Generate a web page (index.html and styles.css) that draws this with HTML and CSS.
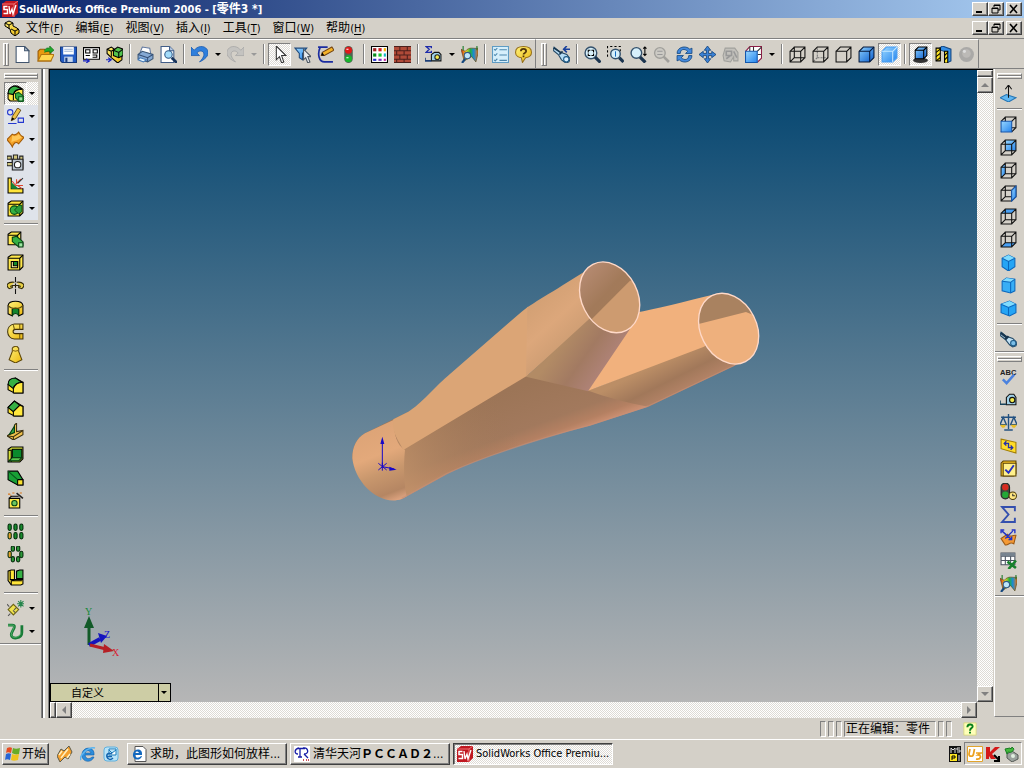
FILE: index.html
```html
<!DOCTYPE html>
<html lang="zh-CN">
<head>
<meta charset="utf-8">
<title>SolidWorks Office Premium 2006 - [零件3 *]</title>
<link rel="stylesheet" href="styles.css">
</head>
<body>
<svg class="sprite" aria-hidden="true">
  <defs>
    <linearGradient id="blue" x1="0" y1="0" x2="1" y2="1"><stop offset="0" stop-color="#8cd0ff"/><stop offset="1" stop-color="#0a5ccc"/></linearGradient>
    <linearGradient id="sky" x1="0" y1="0" x2="1" y2="1"><stop offset="0" stop-color="#9ad8ff"/><stop offset="1" stop-color="#2484ee"/></linearGradient>
    <linearGradient id="gold" x1="0" y1="0" x2="1" y2="1"><stop offset="0" stop-color="#fff27a"/><stop offset="1" stop-color="#ecb810"/></linearGradient>
    <linearGradient id="green" x1="0" y1="0" x2="1" y2="1"><stop offset="0" stop-color="#5fd060"/><stop offset="1" stop-color="#067a20"/></linearGradient>
    <linearGradient id="rainbow"><stop offset="0" stop-color="#d01818"/><stop offset=".3" stop-color="#f8e020"/><stop offset=".55" stop-color="#20b040"/><stop offset=".75" stop-color="#1a8ad8"/><stop offset="1" stop-color="#e87818"/></linearGradient>

    <symbol id="sw" viewBox="0 0 16 16"><path d="M0 3 4 0h12v12l-4 4H0z" fill="#c01820"/><path d="M0 3h12l4-3M12 3v13" stroke="#f07070" fill="none"/><path d="M5.500 5.500H2v3h3.500v4H1.500" stroke="#fff" stroke-width="1.500" fill="none"/><path d="m7 5 1 8 2-5 1 5 3-9" stroke="#fff" stroke-width="1.300" fill="none"/></symbol>
    <symbol id="part" viewBox="0 0 16 16"><path d="M1 3 5 1l4 2v3l4 2 2 2v3l-4 3-4-3-1-4-5-3z" fill="url(#gold)" stroke="#000"/><path d="m1 3 4 2 4-2M5 5v4M7 9l4 2 4-2M11 11v5" stroke="#000" fill="none"/></symbol>
    <symbol id="new" viewBox="0 0 16 16"><path d="M2 .5h8l4 4v11H2z" fill="#fff" stroke="#41556e"/><path d="M10 .5v4h4z" fill="#bccbdc" stroke="#41556e"/></symbol>
    <symbol id="open" viewBox="0 0 16 16"><path d="M1 14V5l2-2h4l1 2h5v9z" fill="#e89a10" stroke="#985808"/><path d="m1 14 3-6h12l-3 6z" fill="#ffd64e" stroke="#b27510"/><path d="M7 4c2-3 4-2 5-2V0l4 4-4 3V5c-2 0-3 0-5 1" fill="#21a72c" stroke="#116815" stroke-width=".6"/></symbol>
    <symbol id="save" viewBox="0 0 16 16"><path d="M.5 1h15v14.500H2L.5 14z" fill="#245cc4" stroke="#14387c"/><path d="M3 1h10v7H3z" fill="#fff"/><path d="M4 3h8M4 5h8" stroke="#9db5d8"/><path d="M4 10h8v5H4z" fill="#c9d7eb"/><path d="M5 11h2v4H5z" fill="#173b82"/></symbol>
    <symbol id="drawing" viewBox="0 0 16 16"><path d="M.5 1.500h15v11H.5z" fill="#fff" stroke="#000"/><path d="M2.500 3.500h4v3h-4zM9.500 3.500h4v3h-4zM2.500 9h4M9 8.500h4v2H9" fill="none" stroke="#000"/><path d="M0 14h5m-2-2 3 2-3 2" stroke="#1622c0" fill="none"/></symbol>
    <symbol id="assembly" viewBox="0 0 16 16"><path d="m1 3 4-2 3 2v4l7 1v5l-4 3-6-5-4-4z" fill="url(#gold)" stroke="#000"/><path d="m7 4 4-3 5 2v6l-4 2-5-2z" fill="#52c34d" stroke="#000"/><path d="m7 4 5 2 4-3M12 6v5M1 3l4 2 3-2M5 5v5" stroke="#000" fill="none"/><path d="M0 13h4m-2-2 3 2-3 2" stroke="#1622c0" fill="none"/></symbol>
    <symbol id="print" viewBox="0 0 16 16"><path d="m3 6 2-5 7 1 1 6z" fill="#fff" stroke="#6078a0"/><path d="m1 8 4-3 10 3v4l-5 3-9-3z" fill="#85a9d4" stroke="#3c5878"/><path d="m1 8 9 3 5-3M10 11v4" stroke="#334e75" fill="none"/><path d="m3 11 6 2-3 2-5-2z" fill="#e3f4ff" stroke="#4579b6"/></symbol>
    <symbol id="preview" viewBox="0 0 16 16"><path d="M1 .5h8l4 4v11H1z" fill="#fff" stroke="#415d88"/><path d="M9 .5v4h4" fill="#b9cce5" stroke="#415d88"/><circle cx="8" cy="8" r="3.500" fill="#a4dcfa" stroke="#315987"/><path d="m11 11 5 5" stroke="#18345c" stroke-width="2.500"/></symbol>
    <symbol id="undo" viewBox="0 0 16 16"><path d="M0 1v8h8L5.500 6.500C9 3 13 5 12 9c-.5 2-2 4-4 6 7-3 10-8 7-12-3-4-9-3-12 1z" fill="#2f7fdc" stroke="#1757ad" stroke-width=".7"/></symbol>
    <symbol id="redo" viewBox="0 0 16 16"><path d="M16 1v8H8l2.500-2.500C7 3 3 5 4 9c.5 2 2 4 4 6C1 12-2 7 1 3c3-4 9-3 12 1z" fill="#c4c3c0" stroke="#a5a5a5" stroke-width=".7"/></symbol>
    <symbol id="select" viewBox="0 0 16 16"><path d="M5 0v13l3-3 2 6 2-1-2-6h4z" fill="#fff" stroke="#333"/></symbol>
    <symbol id="filter" viewBox="0 0 16 16"><path d="M1 2h11L8 7v6l-3-2V7z" fill="url(#sky)" stroke="#204b7d"/><path d="M9 3v10l2-2 2 5 2-1-2-5h3z" fill="#e9ecf0" stroke="#4b5561"/></symbol>
    <symbol id="sketch" viewBox="0 0 16 16"><path d="M10 1H1M3 1C0 8 2 15 7 15h8" fill="none" stroke="#1b2ca0" stroke-width="1.600"/><path d="m4 9 1-3 9-5 2 3-9 5z" fill="#f5b328" stroke="#744411"/><path d="m4 9 1-3 2 3z" fill="#000"/></symbol>
    <symbol id="light" viewBox="0 0 16 16"><rect x="4" width="8" height="16" rx="4" fill="#4e6252"/><circle cx="8" cy="4" r="3.300" fill="#e01818"/><circle cx="8" cy="12" r="3.300" fill="#18b52c"/><path d="M6 3h2M6 11h2" stroke="#fff"/></symbol>
    <symbol id="colors" viewBox="0 0 16 16"><path d="M.5.500h15v15H.5z" fill="#fff" stroke="#000"/><path d="M2 2h3v3H2z" fill="#a02020"/><path d="M7 2h3v3H7z" fill="#d02020"/><path d="M12 2h2v3h-2z" fill="#f5b200"/><path d="M2 7h3v3H2z" fill="#0a8c20"/><path d="M7 7h3v3H7z" fill="#19c830"/><path d="M12 7h2v3h-2z" fill="#12b7c9"/><path d="M2 12h3v2H2z" fill="#222ccc"/><path d="M7 12h3v2H7z" fill="#7530c0"/><path d="M12 12h2v2h-2z" fill="#c020a0"/></symbol>
    <symbol id="brick" viewBox="0 0 16 16"><path d="M0 0h16v16H0z" fill="#b04a38"/><path d="M0 .5h16M0 4.500h16M0 8.500h16M0 12.500h16M0 15.500h16M5.500 0v4M12.500 0v4M2.500 5v3M9.500 5v3M5.500 9v3M12.500 9v3M2.500 13v3M9.500 13v3" stroke="#4b201c"/></symbol>
    <symbol id="sigma-measure" viewBox="0 0 16 16"><path d="M6 2V.5H1L4 3 1 6h5V4.500" fill="none" stroke="#1d2bab" stroke-width="1.200"/><path d="M6 14V8l3-2h4l2 2v6z" fill="#9fd0e8" stroke="#111"/><circle cx="11.500" cy="10.500" r="2.200" fill="#f2ea50" stroke="#222"/><path d="M6 14H0v-3" stroke="#1c3f78" stroke-width="1.500" fill="none"/></symbol>
    <symbol id="analysis" viewBox="0 0 16 16"><path d="m0 3 4 2c4-5 8-2 12-3v5l-2 8-4-5-7 4z" fill="url(#rainbow)" stroke="#5b4a19" stroke-width=".6"/><circle cx="6" cy="9" r="3" fill="#bde6fa" stroke="#315987"/><path d="m4 12-3 4" stroke="#16487e" stroke-width="2"/><path d="M2 0v4M15 0v4" stroke="#187826"/></symbol>
    <symbol id="options" viewBox="0 0 16 16"><path d="M.5.500h15v15H.5z" fill="#d6effb" stroke="#5f9cc4"/><path d="m2 3 1 1 2-2M2 8l1 1 2-2M2 13l1 1 2-2M7 3.500h7M7 8.500h7M7 13.500h7" fill="none" stroke="#4c87ad"/></symbol>
    <symbol id="help" viewBox="0 0 16 16"><path d="M8 .5C3 .5.500 3 .500 6c0 4 4 5 5.500 5l1 4.500 3-4.500c3-.5 5.500-2 5.500-5C15.500 3 13 .5 8 .5z" fill="url(#gold)" stroke="#96701a"/><path d="M5.500 5c0-3 5-3 5 0 0 1.500-2.500 1.500-2.500 3M8 9v1.500" fill="none" stroke="#53370b" stroke-width="1.600"/></symbol>
    <symbol id="torch-back" viewBox="0 0 16 16"><path d="M1 1 0 4l5 4 3 5 4 3 3-1 1-3-3-4-6-2z" fill="#b5dcf4" stroke="#234865"/><path d="m1 2 6 4M6 8l3-3" stroke="#18364e" stroke-width="1.500"/><circle cx="12.500" cy="12.500" r="2.500" fill="#d8f0ff" stroke="#1e5b87"/><path d="M16 3h-6m3-3-3 3 3 3" fill="none" stroke="#18409c" stroke-width="1.500"/></symbol>
    <symbol id="zoom-fit" viewBox="0 0 16 16"><circle cx="6.500" cy="6.500" r="5.500" fill="#d7f0fb" stroke="#34516c" stroke-width="1.300"/><path d="m10.500 10.500 5 5" stroke="#1b3550" stroke-width="3"/><path d="M4 6V4h2M7 4h2v2M4 7v2h2M9 7v2H7" fill="none" stroke="#000"/></symbol>
    <symbol id="zoom-area" viewBox="0 0 16 16"><path d="M.5 10V.5h12V5" fill="none" stroke="#000" stroke-dasharray="2"/><circle cx="8" cy="7.500" r="4.500" fill="#d7f0fb" stroke="#34516c" stroke-width="1.300"/><path d="m11.500 11 4 4" stroke="#1b3550" stroke-width="3"/><path d="M8 5v5" stroke="#136bc0"/></symbol>
    <symbol id="zoom-inout" viewBox="0 0 16 16"><circle cx="6" cy="6.500" r="5" fill="#d7f0fb" stroke="#34516c" stroke-width="1.300"/><path d="m9.500 10.500 5 5" stroke="#1b3550" stroke-width="3"/><path d="M14 1v8M12.500 2.500 14 1l1.500 1.500M12.500 7.500 14 9l1.500-1.500" fill="none" stroke="#000"/></symbol>
    <symbol id="zoom-sel" viewBox="0 0 16 16"><circle cx="6.500" cy="6.500" r="5" fill="#cccac4" stroke="#a1a09c" stroke-width="1.300"/><path d="m10 10 5 5" stroke="#a1a09c" stroke-width="2.500"/><path d="M4 5h5M4 8h5" stroke="#999"/></symbol>
    <symbol id="rotate" viewBox="0 0 16 16"><path d="M1 7C1 1 9-1 13 3l2-1v5h-6l2-2C8 2 4 3 4 7zM15 9c0 6-8 8-12 4l-2 1V9h6l-2 2c3 3 7 2 7-2z" fill="#4389dd" stroke="#174981" stroke-width=".8"/></symbol>
    <symbol id="pan" viewBox="0 0 16 16"><path d="m8 0 3 4H9v3h3V5l4 3-4 3V9H9v3h2l-3 4-3-4h2V9H4v2L0 8l4-3v2h3V4H5z" fill="#3b82d6" stroke="#17477f" stroke-width=".8"/></symbol>
    <symbol id="view3d-off" viewBox="0 0 16 16"><path d="M3 2h9l3 4v8h-4v-4l-3 5-6-1-1-5z" fill="#c2c0bb" stroke="#a0a09c"/><path d="M4 5h5v4H4zM11 5l3 6M4 12l4-3" fill="none" stroke="#999" stroke-width="1.500"/></symbol>
    <symbol id="std-views" viewBox="0 0 16 16"><path d="m.5 5 4-4.500h11v11l-4 4" fill="#fff" stroke="#8b1d45"/><path d="M8 5V1M11.500 5l4-4M12 8h3M4.500 5V1" stroke="#333"/><path d="M.5 5h11v10.500H.5z" fill="url(#sky)" stroke="#1257ad"/></symbol>
    <symbol id="wire" viewBox="0 0 16 16"><path d="M1 5h10v10H1zM5 1h10v10H5zM1 5l4-4M11 5l4-4M1 15l4-4M11 15l4-4" fill="none" stroke="#111"/></symbol>
    <symbol id="hidden-gray" viewBox="0 0 16 16"><path d="M5 2v9H15M5 11l-4 4" fill="none" stroke="#777" stroke-dasharray="2 1"/><path d="M1 5h10v10H1zM1 5l4-4h10v10l-4 4M11 5l4-4" fill="none" stroke="#111"/></symbol>
    <symbol id="hidden-none" viewBox="0 0 16 16"><path d="M1 5h10v10H1zM1 5l4-4h10v10l-4 4M11 5l4-4" fill="none" stroke="#111"/></symbol>
    <symbol id="shaded-edge" viewBox="0 0 16 16"><path d="m1 5 4-4h10v10l-4 4H1z" fill="url(#blue)" stroke="#06183a" stroke-linejoin="round"/><path d="M1 5h10v10M11 5l4-4" fill="none" stroke="#06183a"/></symbol>
    <symbol id="shaded" viewBox="0 0 16 16"><path d="m1 5 4-4h10v10l-4 4H1z" fill="url(#sky)" stroke="#479cf2"/><path d="M1 5h10v10M11 5l4-4" fill="none" stroke="#c3e7ff"/></symbol>
    <symbol id="shadow" viewBox="0 0 16 16"><ellipse cx="8" cy="13.500" rx="7" ry="2.500" fill="#333"/><path d="m3 4 3-3h8v8l-3 3H3z" fill="url(#blue)" stroke="#000"/><path d="M3 4h8v8M11 4l3-3" fill="none" stroke="#000"/></symbol>
    <symbol id="section" viewBox="0 0 16 16"><path d="m3 3 4-3 8 3v11l-4 2V6z" fill="#358fe6" stroke="#154781"/><path d="M1 2h4v12H1zM9 5h3v11H9z" fill="#ffe624" stroke="#000"/><path d="m1 6 4-3M1 10l4-3M1 14l4-3M9 9l3-3M9 13l3-3" stroke="#000"/></symbol>
    <symbol id="real-off" viewBox="0 0 16 16"><circle cx="8" cy="8" r="7" fill="#aaa9a7"/><circle cx="8" cy="7" r="4" fill="#bcbab7"/><circle cx="6" cy="5" r="1.500" fill="#ddd"/></symbol>

    <symbol id="features" viewBox="0 0 16 16"><path d="m1 8 1-4 4-3h4l5 3v9l-3 2H3l-2-2z" fill="#ffe84a" stroke="#000"/><path d="M1 8c0-4 3-7 7-7l6 3c-5 0-7 1-8 5z" fill="#35b044" stroke="#000"/><path d="M6 14V9c1-3 4-5 8-5" fill="none" stroke="#000"/><path d="m8 8 3-1 5 4v4l-4 1-4-4z" fill="#35b044" stroke="#095318"/><path d="M11 11h4v4h-4z" fill="#9be8a0" stroke="#095318"/></symbol>
    <symbol id="sketches" viewBox="0 0 16 16"><circle cx="3" cy="4" r="2.500" fill="none" stroke="#2538cf"/><path d="M10.500 9.500h5v4h-5zM1 14.500h8" fill="none" stroke="#2538cf"/><path d="m4 12 1-4 5-8 3 2-5 8z" fill="#f0c448" stroke="#51380b" stroke-width=".8"/><path d="m4 12 1-3 2 1z" fill="#000"/></symbol>
    <symbol id="surface" viewBox="0 0 16 16"><path d="m0 8 5-5c3 2 5-1 6-2 1 3 3 4 5 5l-5 6c-3-3-5 0-6 3-1-3-3-4-5-7z" fill="#f4a126" stroke="#a15a08"/><path d="M5 4c3 2 5 0 6-1l3 3-5 3c-2 0-4 1-5 2z" fill="#ffc85a"/></symbol>
    <symbol id="sheet" viewBox="0 0 16 16"><path d="M0 2h4v3h2V1h4v4h2V2h3v12H6v-3H0V8h5V5H0z" fill="#d2c77d" stroke="#222"/><path d="M5 5h10v10H5z" fill="#bbc5cf" stroke="#222"/><circle cx="10" cy="10" r="3" fill="#fff" stroke="#222"/></symbol>
    <symbol id="weld" viewBox="0 0 16 16"><path d="M1 1h3v10h11v4H1z" fill="#ffe53a" stroke="#000"/><path d="M4 5v6h7z" fill="#138432"/><path d="m8 7 5-5M8 8h7M10 8l4 3M9 6V2M8 8 5 4" stroke="#dc432a"/><path d="m10 6 5-5" stroke="#333"/></symbol>
    <symbol id="mold" viewBox="0 0 16 16"><path d="m1 3 3-2h11v11l-3 3H1z" fill="#ffe53a" stroke="#000"/><path d="M1 4h11v11M12 4l3-3" fill="none" stroke="#000"/><circle cx="7" cy="9.500" r="4" fill="#35b044" stroke="#064715"/><path d="M7 9.500 11 5h3v6l-3 2z" fill="#2a9c3a" stroke="#064715" stroke-width=".8"/></symbol>
    <symbol id="extrude" viewBox="0 0 16 16"><path d="m1 3 3-2h9v9l-3 3H1z" fill="#ffe84a" stroke="#000"/><path d="M1 4h9v9M10 4l3-3" fill="none" stroke="#000"/><path d="m5 6 4-1 6 5v4l-4 1-6-5z" fill="#35b044" stroke="#053c12"/><path d="M11 11h4v4h-4z" fill="#9be8a0" stroke="#053c12"/></symbol>
    <symbol id="cut" viewBox="0 0 16 16"><path d="m1 3 3-2h11v11l-3 3H1z" fill="#ffe84a" stroke="#000"/><path d="M1 4h11v11M12 4l3-3" fill="none" stroke="#000"/><path d="M4 7h6v6H4z" fill="#fff6a0" stroke="#000"/><path d="M6 7h4v4H6z" fill="#118a2c" stroke="#000"/></symbol>
    <symbol id="revolve" viewBox="0 0 16 16"><path d="M8 0v5m0 1v4m0 1v5" stroke="#111"/><path d="M7 5C1 4-2 8 2 11l3-1V8L3 9M9 5c6-1 9 3 5 6l-3-1V8l2 1M5 8h6" fill="#e7cf45" stroke="#332b0a"/></symbol>
    <symbol id="revcut" viewBox="0 0 16 16"><path d="M1 5c1-5 13-5 14 0v8l-4 2V9H5v6l-4-2z" fill="url(#gold)" stroke="#000"/><path d="M5 9c1-2 5-2 6 0v6c-1-3-5-3-6 0z" fill="#12852d" stroke="#053c12"/><path d="M1 5c3 4 11 4 14 0" fill="none" stroke="#5b480c"/></symbol>
    <symbol id="sweep" viewBox="0 0 16 16"><path d="M15 1H7C-2 2-1 15 7 15h8v-5H8c-3 0-3-4 0-4h7z" fill="url(#gold)" stroke="#403109"/><path d="M12 1v5M12 10v5M6 2 7 6" stroke="#6d560b"/></symbol>
    <symbol id="loft" viewBox="0 0 16 16"><path d="m6 1 3-1 2 2v3l3 8-6 3-6-3 3-8V2z" fill="url(#gold)" stroke="#5f4809"/><path d="m5 4 3 1 3-1" fill="none" stroke="#8c6d1d"/></symbol>
    <symbol id="fillet" viewBox="0 0 16 16"><path d="m1 7 2-4 5-2 7 4v10H7l-6-3z" fill="#ffe62e" stroke="#000"/><path d="M1 7c0-4 3-6 7-6l6 4c-4 0-7 2-8 6z" fill="#35b044" stroke="#000"/><path d="M6 15v-4c1-3 4-6 9-6v10z" fill="#ffe83e" stroke="#000"/></symbol>
    <symbol id="chamfer" viewBox="0 0 16 16"><path d="m1 7 6-6 8 5v9H7l-6-3z" fill="#ffe62e" stroke="#000"/><path d="m1 7 6-6 5 4-6 6z" fill="#35b044" stroke="#000"/><path d="M6 15v-4l6-6 3 1v9z" fill="#ffe83e" stroke="#000"/></symbol>
    <symbol id="rib" viewBox="0 0 16 16"><path d="M7 2 9 0v8l6-1v4l-9 5-6-4 7-4z" fill="#f0c04c" stroke="#3b3010"/><path d="M7 3v6l-5 2z" fill="#2fa844" stroke="#053c12"/><path d="m0 12 6 1 9-6M6 13v3" fill="none" stroke="#3b3010"/></symbol>
    <symbol id="shell" viewBox="0 0 16 16"><path d="m1 3 3-2h11v11l-3 3H1z" fill="#d6e03a" stroke="#000"/><path d="M5 3h9v8H5z" fill="#0a8a2d" stroke="#000"/><path d="M1 4h3v11M1 15l4-4" fill="none" stroke="#000"/><path d="M5 11h9l-3 3H2z" fill="#58c44c" stroke="#053c12"/></symbol>
    <symbol id="draft" viewBox="0 0 16 16"><path d="m1 2 9 0 5 8v5h-5L1 10z" fill="#18a036" stroke="#000"/><path d="M10 10h5v5h-5z" fill="#f8e030" stroke="#000"/><path d="m1 2 9 8" stroke="#07551b"/></symbol>
    <symbol id="wizard" viewBox="0 0 16 16"><path d="M2 6h10v9H2z" fill="#ffe84a" stroke="#000"/><path d="m2 6 2-2h7" fill="none" stroke="#000"/><circle cx="7" cy="10.500" r="2.500" fill="#6cc660" stroke="#064715"/><path d="m9 1 6 5" stroke="#222" stroke-width="1.500"/><path d="M1 2h2M5 1h2M12 1h2M3 3h1" stroke="#d77316"/></symbol>
    <symbol id="lin-pattern" viewBox="0 0 16 16"><g fill="#178b2c" stroke="#052b0c"><rect x="1" y="1" width="3" height="6" rx="1.500"/><rect x="6.500" y="1" width="3" height="6" rx="1.500"/><rect x="12" y="1" width="3" height="6" rx="1.500"/><rect x="6.500" y="9" width="3" height="6" rx="1.500"/><rect x="12" y="9" width="3" height="6" rx="1.500"/><rect x="1" y="9" width="3" height="6" rx="1.500" fill="#e5a52e"/></g></symbol>
    <symbol id="circ-pattern" viewBox="0 0 16 16"><g fill="#2c9939" stroke="#052b0c"><rect x="4" y="0" width="3" height="5" rx="1.500"/><rect x="9" y="0" width="3" height="5" rx="1.500"/><rect x="1" y="5" width="3" height="6" rx="1.500" fill="#e5a52e"/><rect x="12" y="5" width="3" height="6" rx="1.500"/><rect x="4" y="10" width="3" height="5" rx="1.500"/><rect x="9" y="10" width="3" height="5" rx="1.500"/></g></symbol>
    <symbol id="mirror" viewBox="0 0 16 16"><path d="M1 2 4 1h3v9h8v4l-2 1H4l-3-4z" fill="#ffe53a" stroke="#000"/><path d="m9 2 3-1h3v8H9z" fill="#35b044" stroke="#000"/><path d="M3 2v8h4M4 11h10M4 11v4" fill="none" stroke="#000"/></symbol>
    <symbol id="refgeo" viewBox="0 0 16 16"><path d="m1 9 5-5 5 5-5 5z" fill="#efe14d" stroke="#6c6313"/><path d="m0 4 11 11M1 15 11 5" stroke="#555" stroke-dasharray="3 5"/><path d="M13 0v7M9.500 3.500h7M10.500 1l5 5M15.500 1l-5 5" stroke="#26854c"/></symbol>
    <symbol id="curve" viewBox="0 0 16 16"><path d="M1 2h4c5 0-1 6-1 9 0 5 10 4 10-2V2" fill="none" stroke="#187b37" stroke-width="2.600"/><path d="M1 2h4c4 0-1 6-1 9 0 4 9 3 9-2" fill="none" stroke="#59b36f" stroke-width=".8"/></symbol>

    <symbol id="normal" viewBox="0 0 16 16"><path d="m0 12 6-3 9 3-7 4z" fill="#60b7f2" stroke="#2575b4"/><path d="M8 12V1M5 4l3-4 3 4" fill="none" stroke="#111"/></symbol>
    <symbol id="v-front" viewBox="0 0 16 16"><path d="M5 1h10v10H5zM1 5l4-4M11 5l4-4M11 15l4-4M1 15l4-4" fill="none" stroke="#111"/><path d="M1 5h10v10H1z" fill="url(#sky)" stroke="#1757ad"/></symbol>
    <symbol id="v-back" viewBox="0 0 16 16"><path d="M5 1h10v10H5z" fill="url(#sky)"/><use href="#wire"/></symbol>
    <symbol id="v-left" viewBox="0 0 16 16"><path d="m1 5 4-4v10l-4 4z" fill="url(#sky)"/><use href="#wire"/></symbol>
    <symbol id="v-right" viewBox="0 0 16 16"><use href="#wire"/><path d="m11 5 4-4v10l-4 4z" fill="url(#sky)" stroke="#1757ad"/></symbol>
    <symbol id="v-top" viewBox="0 0 16 16"><path d="m1 5 4-4h10l-4 4z" fill="#49a0f4"/><use href="#wire"/></symbol>
    <symbol id="v-bottom" viewBox="0 0 16 16"><path d="m1 15 4-4h10l-4 4z" fill="#49a0f4"/><use href="#wire"/></symbol>
    <symbol id="iso" viewBox="0 0 16 16"><path d="m2 4 6-3 6 3v8l-6 4-6-4z" fill="#25a5f5" stroke="#0c68bd"/><path d="m2 4 6 3 6-3-6-3z" fill="#80dcff"/><path d="m2 4 6 3 6-3M8 7v9" stroke="#0c68bd" fill="none"/></symbol>
    <symbol id="tri" viewBox="0 0 16 16"><path d="m2 4 4-3 8 1v11l-4 2-8-2z" fill="#38aef6" stroke="#0c68bd"/><path d="m2 4 8 1 4-3-8-1z" fill="#80dcff"/><path d="m2 4 8 1 4-3M10 5v10" stroke="#0c68bd" fill="none"/></symbol>
    <symbol id="dim" viewBox="0 0 16 16"><path d="m1 4 8-3 6 3v8l-6 3-8-3z" fill="#25a5f5" stroke="#0c68bd"/><path d="m1 4 8-3 6 3-7 3z" fill="#80dcff"/><path d="m1 4 7 3 7-3M8 7v8" stroke="#0c68bd" fill="none"/></symbol>
    <symbol id="torch" viewBox="0 0 16 16"><path d="M1 1 0 4l5 4 4 5 3 2 3-1 1-3-4-4-6-2z" fill="#bfdff2" stroke="#234865"/><path d="m1 2 5 4M5 8l3-3" stroke="#18364e" stroke-width="2"/><circle cx="12.500" cy="11.500" r="2.500" fill="#7bbfe8" stroke="#1e5b87"/></symbol>
    <symbol id="spell" viewBox="0 0 18 18"><text x="0" y="7" class="abc">ABC</text><path d="m3 12 4 4 8-9" fill="none" stroke="#4b82df" stroke-width="2.600"/></symbol>
    <symbol id="measure" viewBox="0 0 16 16"><path d="M6 13V6l3-3h4l2 3v7z" fill="#9fd0e8" stroke="#111"/><circle cx="11.500" cy="8.500" r="2.500" fill="#f2ea50" stroke="#111"/><path d="M6 12.500H0V9" fill="none" stroke="#17425b" stroke-width="1.500"/></symbol>
    <symbol id="mass" viewBox="0 0 16 16"><path d="M8 0v14M1 3h14M4 15h8M3 3 0 10h6zM13 3l-3 7h6z" fill="none" stroke="#235181" stroke-width="1.300"/><path d="M0 10h6l-2 3H2zM10 10h6l-2 3h-2z" fill="#e8bd28"/></symbol>
    <symbol id="sectprop" viewBox="0 0 16 16"><path d="m1 2 14 3v10L1 11z" fill="#ffdc28" stroke="#a17d06"/><path d="M4 6h4v4h4M6 4 4 6l2 2M10 8l2 2-2 2" fill="none" stroke="#2531aa" stroke-width="1.300"/></symbol>
    <symbol id="check" viewBox="0 0 16 16"><path d="m1 3 2-2h12v12l-2 2H1z" fill="#f8c423" stroke="#5b4204"/><path d="M3 3h12v12H3z" fill="#fff08b" stroke="#5b4204"/><path d="m5 9 3 3 5-7" fill="none" stroke="#2531c2" stroke-width="1.800"/></symbol>
    <symbol id="stats" viewBox="0 0 16 16"><rect x="1" y="0" width="8" height="15" rx="4" fill="#3e493e" stroke="#222"/><circle cx="5" cy="4" r="3" fill="#d72b20"/><circle cx="5" cy="11" r="3" fill="#23a937"/><circle cx="12" cy="12" r="3.500" fill="#ffe782" stroke="#4e3c07"/><path d="M12 10v2h2" fill="none" stroke="#333"/></symbol>
    <symbol id="sum" viewBox="0 0 16 16"><path d="M14 5V1H2l6 7-6 7h12v-4" fill="none" stroke="#344fae" stroke-width="1.800"/></symbol>
    <symbol id="deviation" viewBox="0 0 16 16"><path d="m1 9 6-4c3 4 5 0 8 1l-2 8c-4-3-5 2-8 1z" fill="#f59a34" stroke="#9c5813"/><path d="m2 2 9 8M12 2 5 9M1 4V1h3M11 1h3v3M11 7v3H8" fill="none" stroke="#2031c9" stroke-width="1.300"/></symbol>
    <symbol id="table" viewBox="0 0 16 16"><path d="M1 1h13v11H1z" fill="#fff" stroke="#4a5260"/><path d="M1 4h13M1 8h13M5 1v11M10 1v11" stroke="#4a5260"/><path d="M1 1h13v3H1z" fill="#77838f"/><path d="m7 9 8 6M15 8l-7 8" stroke="#16802b" stroke-width="2.500"/></symbol>

    <symbol id="windows" viewBox="0 0 16 16"><path d="M2 2c2-1 4-1 5 0L6 7c-2-1-4-1-5 0z" fill="#e84c20"/><path d="M8 2c2 1 4 1 7 0l-1 6c-3 1-5 0-7-1z" fill="#68ac28"/><path d="M1 8c2-1 4-1 5 0l-1 6c-2-1-4-1-5 0z" fill="#2766d4"/><path d="M7 8c2 1 4 1 7 0l-1 6c-3 1-5 1-7 0z" fill="#efc31d"/></symbol>
    <symbol id="media" viewBox="0 0 16 16"><path d="m0 10 4-7 3 2 5-5 3 6-4 7-3-2-5 5z" fill="#f5a02d" stroke="#5c5b4b"/><path d="m4 12 7-9M2 9l3-4M10 12l3-4" stroke="#fff1c1" stroke-width="1.500"/></symbol>
    <symbol id="ie" viewBox="0 0 16 16"><path d="M14 9H5c1 5 5 4 7 2h2c-3 7-13 5-12-3 1-8 13-8 12 1zM5 7h6c-1-3-5-3-6 0z" fill="#2d8edc" stroke="#0c5ba8" stroke-width=".6"/><path d="M1 14C-2 11 8 0 15 2" fill="none" stroke="#5cb4ef" stroke-width="1.500"/></symbol>
    <symbol id="outlook" viewBox="0 0 16 16"><rect x="1" y="1" width="14" height="14" rx="3" fill="#b8e3f8" stroke="#5fb0de"/><path d="M6 3h7v6H6zM6 4l3 3 4-3" fill="#fff" stroke="#1578b9"/><path d="M9 8c-3-2-6 0-5 3s4 3 6 1M4 10.500h5" fill="none" stroke="#1566b0" stroke-width="1.500"/></symbol>
    <symbol id="iepage" viewBox="0 0 16 16"><path d="M4 .5h8l3 3v12H4z" fill="#fff" stroke="#555"/><path d="M11 9H4c1 4 4 3 6 1h1c-2 6-10 4-9-2 1-6 10-6 9 1zM4 7h4c-1-2-3-2-4 0z" fill="#1268bf"/></symbol>
    <symbol id="pccad" viewBox="0 0 16 16"><path d="M0 0h16v16H0z" fill="#fff"/><path d="M5 2C0 3 0 8 4 8M3 2.500h8M6 3v8M4 11h4M9 2c5-1 7 6 1 6M10 8l4 4" fill="none" stroke="#171da7" stroke-width="1.300"/><path d="M9 14h1M12 14h1M14 14h1" stroke="#b81820" stroke-width="1.500"/></symbol>
    <symbol id="qhelp" viewBox="0 0 16 16"><path d="M1 1h14v14H1z" fill="#ffffb8" stroke="#d7d780"/><path d="M5 6c0-4 6-4 6-1 0 2-3 2-3 5M8 11v2" fill="none" stroke="#08801c" stroke-width="2.200"/></symbol>
    <symbol id="ime" viewBox="0 0 12 16"><path d="M0 0h12v16H0z" fill="#111"/><path d="M1 8h7v7H1z" fill="#ffe622"/><path d="M2 7V2l2 2 2-2v5M11 2H8v2h3v2H8M10 9v6" fill="none" stroke="#ddd"/><path d="M3 14v-4h3v2H3" fill="none" stroke="#000"/></symbol>
    <symbol id="u3" viewBox="0 0 16 16"><path d="M.5.500h15v15H.5z" fill="#fff" stroke="#e2a42c"/><path d="M3 3 2 8c0 3 4 3 4.500 0L7.500 3M9 7h5l-3 2c4 0 3 5-2 4" fill="none" stroke="#eba01e" stroke-width="1.700"/></symbol>
    <symbol id="kav" viewBox="0 0 16 16"><path d="M1 1h4v5l5-5h5L7 8l4 5H6l-2-3v3H1z" fill="#d41818"/><path d="m9 9 5 5M14 10v5H9" fill="none" stroke="#000" stroke-width="2"/></symbol>
    <symbol id="safe" viewBox="0 0 16 16"><path d="m4 8 5-3 6 4v4l-6 3-5-4z" fill="#9ba29d" stroke="#545954"/><path d="M7 2 2 3l2 5 1-2c4 1 5-1 6-3L9 1 8 3z" fill="#43b83c" stroke="#187c22"/><circle cx="10" cy="10" r="2" fill="#e1eee0"/></symbol>

    <symbol id="min" viewBox="0 0 10 10"><path d="M1 7h6v2H1z"/></symbol>
    <symbol id="restore" viewBox="0 0 10 10"><path d="M3 3V1h6v5H7M3 1.500h6M1 4h6v5H1zM1 4.500h6" fill="none" stroke="#000"/></symbol>
    <symbol id="close" viewBox="0 0 10 10"><path d="m1 1 7 8M8 1 1 9" stroke="#000" stroke-width="1.600"/></symbol>
  </defs>
</svg>

<header class="titlebar">
  <svg class="icon"><use href="#sw"/></svg>
  <h1>SolidWorks Office Premium 2006 - [<span>零件3 *</span>]</h1>
  <div class="winbtns"><button aria-label="最小化"><svg><use href="#min"/></svg></button><button aria-label="还原"><svg><use href="#restore"/></svg></button><button aria-label="关闭"><svg><use href="#close"/></svg></button></div>
</header>

<nav class="menubar">
  <svg class="icon"><use href="#part"/></svg>
  <button>文件<small>(<u>F</u>)</small></button><button>编辑<small>(<u>E</u>)</small></button><button>视图<small>(<u>V</u>)</small></button><button>插入<small>(<u>I</u>)</small></button><button>工具<small>(<u>T</u>)</small></button><button>窗口<small>(<u>W</u>)</small></button><button>帮助<small>(<u>H</u>)</small></button>
  <div class="winbtns"><button aria-label="最小化"><svg><use href="#min"/></svg></button><button aria-label="还原"><svg><use href="#restore"/></svg></button><button aria-label="关闭"><svg><use href="#close"/></svg></button></div>
</nav>

<div class="toolbars">
  <div class="toolbar standard">
    <i class="grip"></i>
    <button class="tool" aria-label="新建"><svg><use href="#new"/></svg></button>
    <button class="tool" aria-label="打开"><svg><use href="#open"/></svg></button>
    <button class="tool" aria-label="保存"><svg><use href="#save"/></svg></button>
    <button class="tool" aria-label="从零件制作工程图"><svg><use href="#drawing"/></svg></button>
    <button class="tool" aria-label="从零件制作装配体"><svg><use href="#assembly"/></svg></button>
    <i class="sep"></i>
    <button class="tool" aria-label="打印"><svg><use href="#print"/></svg></button>
    <button class="tool" aria-label="打印预览"><svg><use href="#preview"/></svg></button>
    <i class="sep"></i>
    <button class="tool" aria-label="撤消"><svg><use href="#undo"/></svg></button><button class="drop" aria-label="撤消列表"></button>
    <button class="tool" aria-label="重做"><svg><use href="#redo"/></svg></button><button class="drop off" aria-label="重做列表"></button>
    <i class="sep"></i>
    <button class="tool pressed" aria-label="选择"><svg><use href="#select"/></svg></button>
    <button class="tool" aria-label="过滤器"><svg><use href="#filter"/></svg></button>
    <button class="tool" aria-label="草图"><svg><use href="#sketch"/></svg></button>
    <button class="tool" aria-label="重建模型"><svg><use href="#light"/></svg></button>
    <i class="sep"></i>
    <button class="tool" aria-label="编辑颜色"><svg><use href="#colors"/></svg></button>
    <button class="tool" aria-label="纹理"><svg><use href="#brick"/></svg></button>
    <i class="sep"></i>
    <button class="tool" aria-label="测量"><svg><use href="#sigma-measure"/></svg></button><button class="drop" aria-label="工具列表"></button>
    <button class="tool" aria-label="分析"><svg><use href="#analysis"/></svg></button>
    <i class="sep"></i>
    <button class="tool" aria-label="选项"><svg><use href="#options"/></svg></button>
    <button class="tool" aria-label="帮助"><svg><use href="#help"/></svg></button>
  </div>
  <div class="toolbar view">
    <i class="grip"></i>
    <button class="tool" aria-label="上一视图"><svg><use href="#torch-back"/></svg></button>
    <i class="sep"></i>
    <button class="tool" aria-label="整屏显示全图"><svg><use href="#zoom-fit"/></svg></button>
    <button class="tool" aria-label="局部放大"><svg><use href="#zoom-area"/></svg></button>
    <button class="tool" aria-label="放大或缩小"><svg><use href="#zoom-inout"/></svg></button>
    <button class="tool" aria-label="放大所选范围"><svg><use href="#zoom-sel"/></svg></button>
    <button class="tool" aria-label="旋转视图"><svg><use href="#rotate"/></svg></button>
    <button class="tool" aria-label="平移"><svg><use href="#pan"/></svg></button>
    <button class="tool" aria-label="3D工程图视图"><svg><use href="#view3d-off"/></svg></button>
    <button class="tool" aria-label="标准视图"><svg><use href="#std-views"/></svg></button><button class="drop" aria-label="视图列表"></button>
    <i class="sep"></i>
    <button class="tool" aria-label="线架图"><svg><use href="#wire"/></svg></button>
    <button class="tool" aria-label="隐藏线可见"><svg><use href="#hidden-gray"/></svg></button>
    <button class="tool" aria-label="消除隐藏线"><svg><use href="#hidden-none"/></svg></button>
    <button class="tool" aria-label="带边线上色"><svg><use href="#shaded-edge"/></svg></button>
    <button class="tool pressed" aria-label="上色"><svg><use href="#shaded"/></svg></button>
    <i class="sep"></i>
    <button class="tool pressed" aria-label="阴影"><svg><use href="#shadow"/></svg></button>
    <button class="tool" aria-label="剖面视图"><svg><use href="#section"/></svg></button>
    <button class="tool" aria-label="RealView"><svg><use href="#real-off"/></svg></button>
  </div>
</div>

<main class="work">
  <aside class="palette left">
    <div class="stack">
      <i class="hgrip"></i>
      <div class="tabs">
        <div class="row on"><button class="tool pressed" aria-label="特征"><svg><use href="#features"/></svg></button><button class="drop" aria-label="特征列表"></button></div>
        <div class="row"><button class="tool" aria-label="草图工具"><svg><use href="#sketches"/></svg></button><button class="drop" aria-label="草图列表"></button></div>
        <div class="row"><button class="tool" aria-label="曲面"><svg><use href="#surface"/></svg></button><button class="drop" aria-label="曲面列表"></button></div>
        <div class="row"><button class="tool" aria-label="钣金"><svg><use href="#sheet"/></svg></button><button class="drop" aria-label="钣金列表"></button></div>
        <div class="row"><button class="tool" aria-label="焊件"><svg><use href="#weld"/></svg></button><button class="drop" aria-label="焊件列表"></button></div>
        <div class="row"><button class="tool" aria-label="模具"><svg><use href="#mold"/></svg></button><button class="drop" aria-label="模具列表"></button></div>
      </div>
      <i class="hsep"></i>
      <button class="tool" aria-label="拉伸凸台"><svg><use href="#extrude"/></svg></button>
      <button class="tool" aria-label="拉伸切除"><svg><use href="#cut"/></svg></button>
      <button class="tool" aria-label="旋转凸台"><svg><use href="#revolve"/></svg></button>
      <button class="tool" aria-label="旋转切除"><svg><use href="#revcut"/></svg></button>
      <button class="tool" aria-label="扫描"><svg><use href="#sweep"/></svg></button>
      <button class="tool" aria-label="放样"><svg><use href="#loft"/></svg></button>
      <i class="hsep"></i>
      <button class="tool" aria-label="圆角"><svg><use href="#fillet"/></svg></button>
      <button class="tool" aria-label="倒角"><svg><use href="#chamfer"/></svg></button>
      <button class="tool" aria-label="筋"><svg><use href="#rib"/></svg></button>
      <button class="tool" aria-label="抽壳"><svg><use href="#shell"/></svg></button>
      <button class="tool" aria-label="拔模"><svg><use href="#draft"/></svg></button>
      <button class="tool" aria-label="异型孔向导"><svg><use href="#wizard"/></svg></button>
      <i class="hsep"></i>
      <button class="tool" aria-label="线性阵列"><svg><use href="#lin-pattern"/></svg></button>
      <button class="tool" aria-label="圆周阵列"><svg><use href="#circ-pattern"/></svg></button>
      <button class="tool" aria-label="镜向"><svg><use href="#mirror"/></svg></button>
      <i class="hsep"></i>
      <div class="row"><button class="tool" aria-label="参考几何体"><svg><use href="#refgeo"/></svg></button><button class="drop" aria-label="参考几何体列表"></button></div>
      <div class="row"><button class="tool" aria-label="曲线"><svg><use href="#curve"/></svg></button><button class="drop" aria-label="曲线列表"></button></div>
    </div>
  </aside>
  <div class="splitter"></div>

  <section class="document">
    <div class="canvas">
      <svg class="scene" viewBox="0 0 927 632" role="img" aria-label="零件模型">
        <defs>
          <linearGradient id="body" gradientUnits="userSpaceOnUse" x1="484" y1="431" x2="550" y2="609"><stop offset="0" stop-color="#9c7557"/><stop offset=".65" stop-color="#a2795d"/><stop offset=".85" stop-color="#b48062"/><stop offset="1" stop-color="#cf9274"/></linearGradient>
          <linearGradient id="bodyLeft" gradientUnits="userSpaceOnUse" x1="180" y1="650" x2="520" y2="520"><stop offset="0" stop-color="#bf9068" stop-opacity=".85"/><stop offset="1" stop-color="#9d7656" stop-opacity="0"/></linearGradient>
          <linearGradient id="cyl" gradientUnits="userSpaceOnUse" x1="90" y1="540" x2="170" y2="750"><stop offset="0" stop-color="#dda477"/><stop offset=".35" stop-color="#e3a97b"/><stop offset=".6" stop-color="#c8976d"/><stop offset=".88" stop-color="#b58663"/><stop offset="1" stop-color="#dca27e"/></linearGradient>
          <linearGradient id="armTop" gradientUnits="userSpaceOnUse" x1="590" y1="160" x2="690" y2="270"><stop offset="0" stop-color="#d4a175"/><stop offset=".5" stop-color="#dca77b"/><stop offset="1" stop-color="#cf9e74"/></linearGradient>
          <linearGradient id="armSide" gradientUnits="userSpaceOnUse" x1="660" y1="285" x2="780" y2="370"><stop offset="0" stop-color="#b28b65"/><stop offset=".55" stop-color="#a27a62"/><stop offset="1" stop-color="#ae8276"/></linearGradient>
          <linearGradient id="arm2" gradientUnits="userSpaceOnUse" x1="965" y1="335" x2="1015" y2="435"><stop offset="0" stop-color="#bb8e66"/><stop offset=".55" stop-color="#a1785a"/><stop offset="1" stop-color="#b58468"/></linearGradient>
          <linearGradient id="hole" x1="0" y1="0" x2="1" y2="1"><stop offset="0" stop-color="#c0937e"/><stop offset=".45" stop-color="#a27a5a"/><stop offset="1" stop-color="#a57c56"/></linearGradient>
          <clipPath id="e1"><ellipse cx="809" cy="142" rx="84" ry="111" transform="rotate(-27 809 142)"/></clipPath>
          <clipPath id="e2"><ellipse cx="1166" cy="236" rx="84" ry="111" transform="rotate(-27 1166 236)"/></clipPath>
        </defs>
        <g transform="translate(290 180) scale(.3333)">
          <path d="M75 550 205 485 560 370 745 418 900 400 925 470 750 527C640 555 530 588 440 622 390 640 350 658 320 673L185 747C120 765 50 700 37 625 37 590 50 565 75 550z" fill="url(#body)"/>
          <path d="M165 510 190 595 560 370 745 418 750 527C640 555 530 588 440 622 390 640 350 658 320 673L185 747z" fill="url(#bodyLeft)"/>
          <path d="M75 550 165 508C158 550 172 588 195 600 190 650 192 700 200 739L185 747C120 770 45 700 37 625 37 590 50 565 75 550z" fill="url(#cyl)"/>
          <path d="M160 508 205 485C240 465 290 405 330 372L545 185 564 170V376L190 600C175 570 155 550 160 508z" fill="#dba576"/>
          <path d="M562 172C600 146 650 118 680 98L750 55 809 142 755 208 558 380z" fill="url(#armTop)"/>
          <path d="M750 205 809 142 880 232 745 424 558 380z" fill="url(#armSide)"/>
          <path d="M745 422 1085 287 1166 236 1195 342 925 470C860 458 800 442 745 422z" fill="url(#arm2)"/>
          <path d="M885 188C950 178 1030 155 1125 133L1166 236 1092 290 745 422 868 240z" fill="#f1b17d"/>
          <path d="M185 745 320 671C390 638 530 586 750 525L925 468 1185 345" fill="none" stroke="#c78f78" stroke-width="4" opacity=".6"/>
          <g clip-path="url(#e1)"><path d="M700 20h220v240H700z" fill="url(#hole)"/><path d="M755 208 870 92 920 100V260H800z" fill="#cd9b70"/></g>
          <ellipse cx="809" cy="142" rx="84" ry="111" transform="rotate(-27 809 142)" fill="none" stroke="#ffd9c8" stroke-width="4"/>
          <g clip-path="url(#e2)"><path d="M1060 120h220v240h-220z" fill="#a98260"/><path d="m1076 222 142-36 50 20v150h-192z" fill="#eeb07d"/></g>
          <ellipse cx="1166" cy="236" rx="84" ry="111" transform="rotate(-27 1166 236)" fill="none" stroke="#ffd9c8" stroke-width="4"/>
          <path d="M127 650v-80M127 650l36 7M115 640l25 20M115 660l25-20M127 638v24" fill="none" stroke="#1708c8" stroke-width="3"/><path d="m127 560-6 22h12zM170 659l-22-9v12z" fill="#1708c8"/>
        </g>
        <g transform="translate(39 575)">
          <path d="M0 0v-20" stroke="#125a28" stroke-width="3"/><path d="M-5-17 0-29l5 12z" fill="#125a28"/>
          <path d="M0 0 11-6" stroke="#1515bd" stroke-width="4"/><path d="m9-12 9 3-6 7z" fill="#1515bd"/>
          <path d="m1 0 16 4" stroke="#b52025" stroke-width="3"/><path d="m15-1 10 7-11 2z" fill="#b52025"/>
          <text x="-4" y="-30" class="axis" fill="#168938">Y</text><text x="15" y="-7" class="axis" fill="#1616d0">Z</text><text x="23" y="11" class="axis" fill="#d81d32">X</text>
        </g>
      </svg>
      <div class="config"><select aria-label="配置"><option>自定义</option></select></div>
    </div>
    <div class="hscroll"><i class="splitbox"></i><button aria-label="向左"><i class="tri-left"></i></button><span class="track"></span><button aria-label="向右"><i class="tri-right"></i></button></div>
    <div class="vscroll"><i class="splitbox"></i><button aria-label="向上"><i class="tri-up"></i></button><span class="track"></span><button aria-label="向下"><i class="tri-down"></i></button></div>
    <div class="corner"></div>
  </section>

  <aside class="palette right">
    <div class="stack">
      <i class="hgrip"></i>
      <button class="tool" aria-label="正视于"><svg><use href="#normal"/></svg></button>
      <i class="hsep"></i>
      <button class="tool" aria-label="前视"><svg><use href="#v-front"/></svg></button>
      <button class="tool" aria-label="后视"><svg><use href="#v-back"/></svg></button>
      <button class="tool" aria-label="左视"><svg><use href="#v-left"/></svg></button>
      <button class="tool" aria-label="右视"><svg><use href="#v-right"/></svg></button>
      <button class="tool" aria-label="上视"><svg><use href="#v-top"/></svg></button>
      <button class="tool" aria-label="下视"><svg><use href="#v-bottom"/></svg></button>
      <button class="tool" aria-label="等轴测"><svg><use href="#iso"/></svg></button>
      <button class="tool" aria-label="左右二等角轴测"><svg><use href="#tri"/></svg></button>
      <button class="tool" aria-label="上下二等角轴测"><svg><use href="#dim"/></svg></button>
      <i class="hsep"></i>
      <button class="tool" aria-label="视图定向"><svg><use href="#torch"/></svg></button>
    </div>
    <div class="stack">
      <i class="hgrip"></i>
      <button class="tool" aria-label="拼写检验"><svg><use href="#spell"/></svg></button>
      <button class="tool" aria-label="测量"><svg><use href="#measure"/></svg></button>
      <button class="tool" aria-label="质量特性"><svg><use href="#mass"/></svg></button>
      <button class="tool" aria-label="截面属性"><svg><use href="#sectprop"/></svg></button>
      <button class="tool" aria-label="检查"><svg><use href="#check"/></svg></button>
      <button class="tool" aria-label="特征统计"><svg><use href="#stats"/></svg></button>
      <button class="tool" aria-label="方程式"><svg><use href="#sum"/></svg></button>
      <button class="tool" aria-label="误差分析"><svg><use href="#deviation"/></svg></button>
      <button class="tool" aria-label="系列零件设计表"><svg><use href="#table"/></svg></button>
      <button class="tool" aria-label="COSMOSXpress"><svg><use href="#analysis"/></svg></button>
    </div>
  </aside>
</main>

<div class="statusbar">
  <i class="cell"></i><i class="cell"></i><i class="cell"></i><span class="cell editing">正在编辑：零件</span><i class="cell"></i><i class="cell"></i>
  <button class="quickhelp" aria-label="快速提示"><svg><use href="#qhelp"/></svg></button>
</div>

<footer class="taskbar">
  <button class="raised start"><svg class="icon"><use href="#windows"/></svg>开始</button>
  <div class="quick"><button aria-label="媒体播放器"><svg class="icon"><use href="#media"/></svg></button><button aria-label="Internet Explorer"><svg class="icon"><use href="#ie"/></svg></button><button aria-label="Outlook Express"><svg class="icon"><use href="#outlook"/></svg></button></div>
  <div class="tasks">
    <button class="raised task"><svg class="icon"><use href="#iepage"/></svg><span>求助，此图形如何放样...</span></button>
    <button class="raised task"><svg class="icon"><use href="#pccad"/></svg><span>清华天河<b>ＰＣＣＡＤ２</b>...</span></button>
    <button class="raised task active"><svg class="icon"><use href="#sw"/></svg><span>SolidWorks Office Premiu...</span></button>
  </div>
  <svg class="ime"><use href="#ime"/></svg>
  <div class="tray"><svg class="icon"><use href="#u3"/></svg><svg class="icon"><use href="#kav"/></svg><svg class="icon"><use href="#safe"/></svg></div>
</footer>
</body>
</html>
```

FILE: styles.css
```css
:root {
  --face: #d4d0c8;
  --shade: #808080;
  --dither: repeating-conic-gradient(#fff 0 25%, #dedbd5 0 50%) 0 0 / 2px 2px;
}
* { box-sizing: border-box; }
body {
  margin: 0;
  height: 100vh;
  display: flex;
  flex-direction: column;
  overflow: hidden;
  background: var(--face);
  color: #000;
  font: 12px/16px "DejaVu Sans Condensed", "Noto Sans CJK SC", sans-serif;
}
button {
  margin: 0;
  padding: 0;
  border: 0;
  background: none;
  font: inherit;
  color: inherit;
}
svg { display: block; }
.sprite { position: absolute; width: 0; height: 0; }
.icon { width: 16px; height: 16px; flex: none; }

.titlebar {
  flex: none;
  height: 18px;
  display: flex;
  align-items: center;
  gap: 1px;
  padding: 0 2px;
  background: linear-gradient(90deg, #0a246a, #a6caf0);
}
.titlebar h1 {
  flex: 1;
  margin: 0;
  color: #fff;
  font-size: 11px;
  line-height: 16px;
  font-weight: bold;
}
.titlebar h1 span { font-size: 12px; }
.winbtns { display: flex; margin-left: auto; }
.winbtns button {
  width: 16px;
  height: 14px;
  display: grid;
  place-items: center;
  background: var(--face);
  border: 1px solid;
  border-color: #fff #404040 #404040 #fff;
  box-shadow: inset -1px -1px var(--shade);
}
.winbtns button:last-child { margin-left: 2px; }
.winbtns svg { width: 10px; height: 10px; }

.menubar {
  flex: none;
  height: 20px;
  display: flex;
  align-items: center;
  padding: 0 2px 0 4px;
}
.menubar .icon { margin-right: 6px; }
.menubar > button { margin-right: 12px; }
.menubar small { font-size: 11px; }
.menubar u { text-underline-offset: 2px; }

.toolbars {
  flex: none;
  height: 31px;
  display: flex;
  border-top: 1px solid var(--shade);
  border-bottom: 1px solid var(--shade);
}
.toolbar {
  display: flex;
  align-items: center;
  border-top: 1px solid #fff;
  border-right: 1px solid var(--shade);
}
.grip {
  width: 6px;
  height: 23px;
  margin: 0 2px 0 3px;
  border: 1px solid;
  border-color: #fff var(--shade) var(--shade) #fff;
  background: linear-gradient(90deg, transparent 1px, var(--shade) 1px 2px, #fff 2px 3px, transparent 3px);
}
.view .grip { margin: 0 3px 0 5px; }
.tool {
  flex: none;
  width: 23px;
  height: 23px;
  display: grid;
  place-items: center;
}
.tool svg { width: 17px; height: 17px; }
.pressed {
  background: var(--dither);
  border: 1px solid;
  border-color: var(--shade) #fff #fff var(--shade);
}
.sep {
  width: 2px;
  height: 20px;
  margin: 0 3px;
  border-left: 1px solid var(--shade);
  border-right: 1px solid #fff;
}
.drop {
  flex: none;
  width: 13px;
  height: 23px;
  display: grid;
  place-items: center;
}
.left .drop { width: 9px; }
.drop::after {
  content: "";
  border: 3px solid transparent;
  border-top-color: #000;
  border-bottom: 0;
}
.drop.off::after { border-top-color: #999; }

.work { flex: 1; min-height: 0; display: flex; }
.palette { flex: none; background: var(--face); }
.left { width: 43px; border-right: 1px solid #555; box-shadow: inset -1px 0 var(--shade); }
.right { width: 30px; margin-left: 1px; border-left: 1px solid #fff; margin-bottom: 1px; border-bottom: 1px solid var(--shade); }
.stack {
  display: flex;
  flex-direction: column;
  border-bottom: 1px solid var(--shade);
  box-shadow: 0 1px #fff;
}
.left .stack { padding: 0 3px 0 4px; margin-right: 1px; }
.right .stack { padding: 0 2px; }
.hgrip {
  flex: none;
  height: 6px;
  margin: 4px 0 3px;
  border: 1px solid;
  border-color: #fff var(--shade) var(--shade) #fff;
  background: linear-gradient(transparent 1px, var(--shade) 1px 2px, #fff 2px 3px, transparent 3px);
}
.hsep {
  height: 2px;
  margin: 3px 0;
  border-top: 1px solid var(--shade);
  border-bottom: 1px solid #fff;
}
.row { display: flex; }
.tabs { background: #dfe3ea; }
.row.on { background: var(--dither); }
.splitter { flex: none; width: 6px; border-left: 2px solid #fff; border-right: 1px solid var(--shade); }

.document {
  flex: 1;
  min-width: 0;
  display: grid;
  grid-template: 1fr 16px / 1fr 16px;
  border-left: 1px solid #000;
  border-top: 1px solid #000;
}
.canvas {
  position: relative;
  min-height: 0;
  background: linear-gradient(#00436f, #b6b6b6);
}
.scene { position: absolute; inset: 0; width: 100%; height: 100%; }
.axis { font: 10px "Liberation Serif", serif; }
.abc { font: bold 8px "Liberation Sans", sans-serif; fill: #222; }
.config {
  position: absolute;
  left: 0;
  bottom: 0;
  width: 121px;
  height: 19px;
  border: 1px solid #000;
  background: #cdcda5;
}
.config::after {
  content: "";
  position: absolute;
  right: 3px;
  top: 7px;
  border: 3px solid transparent;
  border-top-color: #000;
  border-bottom: 0;
}
.config select {
  display: block;
  width: 100%;
  height: 17px;
  padding: 0 0 0 20px;
  border: 0;
  appearance: none;
  background: linear-gradient(#000, #000) right 11px top / 1px 100% no-repeat;
  color: #000;
  font: 11px/17px "Noto Sans CJK SC", sans-serif;
}
.hscroll { display: flex; }
.vscroll { grid-column: 2; grid-row: 1; display: flex; flex-direction: column; }
.corner { background: var(--face); }
.track { flex: 1; background: var(--dither); }
.hscroll button, .vscroll button, .splitbox {
  flex: none;
  width: 16px;
  height: 16px;
  display: grid;
  place-items: center;
  background: var(--face);
  border: 1px solid;
  border-color: #fff #404040 #404040 #fff;
  box-shadow: inset -1px -1px var(--shade);
}
.hscroll .splitbox { width: 6px; }
.vscroll .splitbox { height: 7px; }
.tri-left, .tri-right, .tri-up, .tri-down { border: 4px solid transparent; }
.tri-left { border-left: 0; border-right-color: var(--shade); }
.tri-right { border-right: 0; border-left-color: var(--shade); }
.tri-up { border-top: 0; border-bottom-color: var(--shade); }
.tri-down { border-bottom: 0; border-top-color: var(--shade); }

.statusbar {
  flex: none;
  height: 21px;
  display: flex;
  align-items: center;
  justify-content: flex-end;
  gap: 2px;
  padding-right: 47px;
}
.cell {
  width: 6px;
  height: 16px;
  border: 1px solid;
  border-color: var(--shade) #fff #fff var(--shade);
}
.editing { width: auto; padding: 0 5px 0 1px; line-height: 14px; }
.quickhelp { margin-left: 9px; }
.quickhelp svg { width: 14px; height: 14px; }

.taskbar {
  flex: none;
  height: 29px;
  display: flex;
  align-items: center;
  padding: 0 2px 1px;
  border-top: 1px solid #fff;
}
.raised {
  height: 22px;
  display: flex;
  align-items: center;
  border: 1px solid;
  border-color: #fff #404040 #404040 #fff;
  box-shadow: inset -1px -1px var(--shade);
}
.start { gap: 1px; padding: 0 2px; }
.quick { display: flex; gap: 7px; margin: 0 8px; }
.tasks { flex: 1; min-width: 0; display: flex; gap: 3px; }
.task {
  flex: 0 1 160px;
  min-width: 0;
  gap: 3px;
  padding: 0 3px;
  white-space: nowrap;
}
.task span { overflow: hidden; }
.task b { font-family: "Noto Sans CJK SC", sans-serif; }
.task.active {
  background: var(--dither);
  border-color: #404040 #fff #fff #404040;
  box-shadow: inset 1px 1px var(--shade);
  font-size: 11px;
}
.ime { width: 12px; height: 16px; margin-right: 3px; }
.tray {
  height: 23px;
  display: flex;
  align-items: center;
  gap: 2px;
  padding: 0 2px;
  border: 1px solid;
  border-color: var(--shade) #fff #fff var(--shade);
}
```
